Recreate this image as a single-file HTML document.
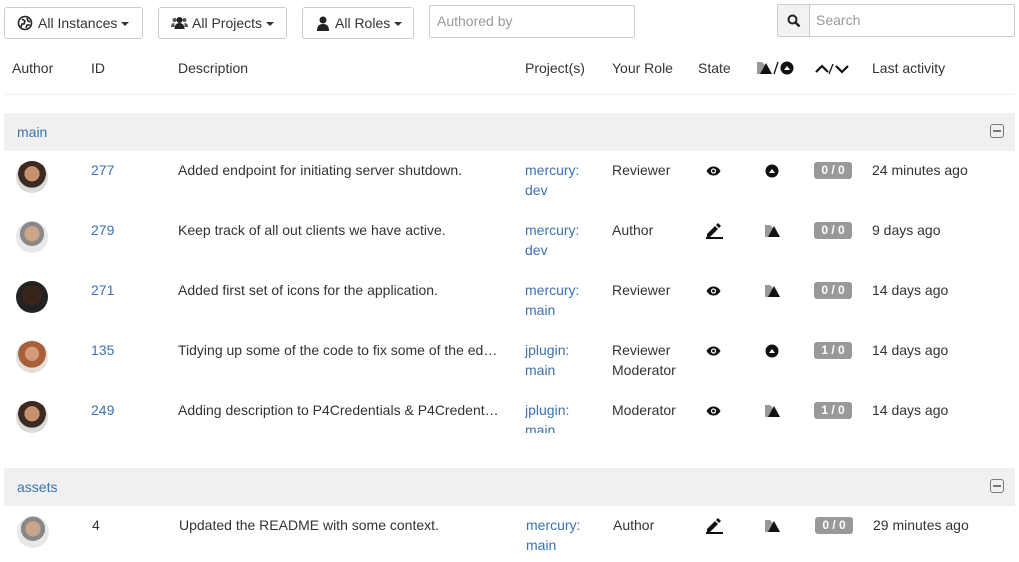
<!DOCTYPE html>
<html><head><meta charset="utf-8"><style>
*{box-sizing:border-box;margin:0;padding:0}
body{width:1019px;height:562px;overflow:hidden;background:#fff;font-family:"Liberation Sans",sans-serif;font-size:14px;color:#333;position:relative}
.a{position:absolute;white-space:nowrap}
.btn{position:absolute;top:7px;height:32px;border:1px solid #ccc;border-radius:3px;background:#fff;font-size:14px;color:#333;display:flex;align-items:center;padding-left:12px}
.car{display:inline-block;width:0;height:0;border-left:4px solid transparent;border-right:4px solid transparent;border-top:4px solid #333;margin-left:4px;margin-top:2px}
.inp{position:absolute;border:1px solid #ccc;border-radius:2px;color:#999;font-size:14px;padding:7px 7px}
.grp{position:absolute;left:4px;width:1011px;height:38px;background:#f0f0f0}
.grp span{position:absolute;left:13px;top:11px;color:#3a72b0}
.min{position:absolute;right:11px;top:11px;width:14px;height:14px;border:1.5px solid #777;border-radius:3px}
.min:after{content:"";position:absolute;left:2px;right:2px;top:5px;height:1.5px;background:#777}
.blue{color:#3a72b0}
.av{position:absolute;width:32px;height:32px;border-radius:50%;overflow:hidden}
.badge{position:absolute;width:38px;height:17px;background:#999;color:#fff;font-weight:bold;font-size:12px;text-align:center;line-height:17px;border-radius:3px}
</style></head><body>
<div class="btn" style="left:4px;width:139px"><svg width="16" height="16" viewBox="0 0 16 16" style="margin-right:5px"><circle cx="8" cy="8" r="6.5" fill="none" stroke="#222" stroke-width="1.6"/><path d="M5 4l3 2-1 3-2 0-1 3M10 3l1 3 2 1M9 13l1-3 3 0" stroke="#222" stroke-width="1.6" fill="none"/></svg>All Instances<span class="car"></span></div>
<div class="btn" style="left:158px;width:129px"><svg width="17" height="16" viewBox="0 0 17 16" style="margin-right:4px"><circle cx="8.5" cy="5" r="3" fill="#222"/><path d="M3.5 14c0-4 2-6 5-6s5 2 5 6z" fill="#222"/><circle cx="3.5" cy="5" r="2" fill="#555"/><circle cx="13.5" cy="5" r="2" fill="#555"/><path d="M0 12c0-3 1.5-4 3.5-4v4zM17 12c0-3-1.5-4-3.5-4v4z" fill="#555"/></svg>All Projects<span class="car"></span></div>
<div class="btn" style="left:302px;width:112px;padding-left:14px"><svg width="12" height="15" viewBox="0 0 12 15" style="margin-right:6px"><circle cx="6" cy="4" r="3.5" fill="#222"/><path d="M0 15c0-5 2-7 6-7s6 2 6 7z" fill="#222"/></svg>All Roles<span class="car"></span></div>
<div class="inp" style="left:429px;top:5px;width:206px;height:33px">Authored by</div>
<div class="a" style="left:777px;top:4px;width:33px;height:33px;border:1px solid #ccc;border-radius:2px 0 0 2px;background:#f2f2f2"><svg width="14" height="14" viewBox="0 0 14 14" style="position:absolute;left:9px;top:9px"><circle cx="5.5" cy="5.5" r="4" fill="none" stroke="#222" stroke-width="2"/><path d="M8.5 8.5l4 4" stroke="#222" stroke-width="2.4"/></svg></div>
<div class="inp" style="left:809px;top:4px;width:206px;height:33px;border-left:none">Search</div>

<div class="a" style="left:12px;top:60px">Author</div>
<div class="a" style="left:91px;top:60px">ID</div>
<div class="a" style="left:178px;top:60px">Description</div>
<div class="a" style="left:525px;top:60px">Project(s)</div>
<div class="a" style="left:612px;top:60px">Your Role</div>
<div class="a" style="left:698px;top:60px">State</div>
<div class="a" style="left:757px;top:61px"><svg width="38" height="14" viewBox="0 0 38 14"><path d="M0 1h5l3 3v2L5 13H0z" fill="#999"/><path d="M9 2l6 11H3z" fill="#111"/><path d="M17 13l4-12" stroke="#111" stroke-width="1.3"/><circle cx="30" cy="7" r="6.5" fill="#111"/><path d="M27 9l3-4 3 4z" fill="#fff"/></svg></div>
<div class="a" style="left:815px;top:62px"><svg width="36" height="12" viewBox="0 0 36 12"><path d="M1 9l6-6 6 6" stroke="#111" stroke-width="2.2" fill="none"/><path d="M14 11l4-10" stroke="#111" stroke-width="1.3"/><path d="M21 3l6 6 6-6" stroke="#111" stroke-width="2.2" fill="none"/></svg></div>
<div class="a" style="left:872px;top:60px">Last activity</div>
<div class="a" style="left:4px;top:94px;width:1011px;height:1px;background:#eee"></div>

<div class="grp" style="top:113px"><span>main</span><div class="min"></div></div>
<div class="grp" style="top:468px"><span>assets</span><div class="min"></div></div>

<div class="av" style="left:16px;top:161px;background:radial-gradient(circle at 50% 40%,#c8926e 0 30%,#3a2a22 31% 55%,#d9d9d9 56%)"></div>
<div class="av" style="left:16px;top:221px;background:radial-gradient(circle at 50% 40%,#caa58a 0 30%,#888 31% 48%,#e8e8e8 49%)"></div>
<div class="av" style="left:16px;top:281px;background:radial-gradient(circle at 50% 45%,#3a2418 0 40%,#222 41%)"></div>
<div class="av" style="left:16px;top:341px;background:radial-gradient(circle at 50% 40%,#d49a7a 0 28%,#a8603a 29% 55%,#e5e0dc 56%)"></div>
<div class="av" style="left:16px;top:401px;background:radial-gradient(circle at 50% 40%,#c8926e 0 30%,#3a2a22 31% 55%,#d9d9d9 56%)"></div>
<div class="av" style="left:17px;top:516px;background:radial-gradient(circle at 50% 40%,#caa58a 0 30%,#888 31% 48%,#e8e8e8 49%)"></div>

<div class="a blue" style="left:91px;top:162px">277</div>
<div class="a" style="left:178px;top:162px">Added endpoint for initiating server shutdown.</div>
<div class="a blue" style="left:525px;top:160px;line-height:20px">mercury:<br>dev</div>
<div class="a" style="left:612px;top:162px">Reviewer</div>

<div class="a blue" style="left:91px;top:222px">279</div>
<div class="a" style="left:178px;top:222px">Keep track of all out clients we have active.</div>
<div class="a blue" style="left:525px;top:220px;line-height:20px">mercury:<br>dev</div>
<div class="a" style="left:612px;top:222px">Author</div>

<div class="a blue" style="left:91px;top:282px">271</div>
<div class="a" style="left:178px;top:282px">Added first set of icons for the application.</div>
<div class="a blue" style="left:525px;top:280px;line-height:20px">mercury:<br>main</div>
<div class="a" style="left:612px;top:282px">Reviewer</div>

<div class="a blue" style="left:91px;top:342px">135</div>
<div class="a" style="left:178px;top:342px">Tidying up some of the code to fix some of the ed…</div>
<div class="a blue" style="left:525px;top:340px;line-height:20px">jplugin:<br>main</div>
<div class="a" style="left:612px;top:340px;line-height:20px">Reviewer<br>Moderator</div>

<div class="a blue" style="left:91px;top:402px">249</div>
<div class="a" style="left:178px;top:402px">Adding description to P4Credentials &amp; P4Credent…</div>
<div class="a blue" style="left:525px;top:400px;line-height:20px;height:33px;overflow:hidden">jplugin:<br>main</div>
<div class="a" style="left:612px;top:402px">Moderator</div>

<div class="a" style="left:92px;top:517px">4</div>
<div class="a" style="left:179px;top:517px">Updated the README with some context.</div>
<div class="a blue" style="left:526px;top:515px;line-height:20px">mercury:<br>main</div>
<div class="a" style="left:613px;top:517px">Author</div>

<svg class="a" style="left:706px;top:166px" width="15" height="10" viewBox="0 0 15 10"><path d="M0.5 5C2.5 1.5 5 0.5 7.5 0.5S12.5 1.5 14.5 5C12.5 8.5 10 9.5 7.5 9.5S2.5 8.5 0.5 5z" fill="#111"/><circle cx="7.5" cy="5" r="2.6" fill="#fff"/><circle cx="7.5" cy="5" r="1.4" fill="#111"/></svg>
<svg class="a" style="left:706px;top:286px" width="15" height="10" viewBox="0 0 15 10"><path d="M0.5 5C2.5 1.5 5 0.5 7.5 0.5S12.5 1.5 14.5 5C12.5 8.5 10 9.5 7.5 9.5S2.5 8.5 0.5 5z" fill="#111"/><circle cx="7.5" cy="5" r="2.6" fill="#fff"/><circle cx="7.5" cy="5" r="1.4" fill="#111"/></svg>
<svg class="a" style="left:706px;top:346px" width="15" height="10" viewBox="0 0 15 10"><path d="M0.5 5C2.5 1.5 5 0.5 7.5 0.5S12.5 1.5 14.5 5C12.5 8.5 10 9.5 7.5 9.5S2.5 8.5 0.5 5z" fill="#111"/><circle cx="7.5" cy="5" r="2.6" fill="#fff"/><circle cx="7.5" cy="5" r="1.4" fill="#111"/></svg>
<svg class="a" style="left:706px;top:406px" width="15" height="10" viewBox="0 0 15 10"><path d="M0.5 5C2.5 1.5 5 0.5 7.5 0.5S12.5 1.5 14.5 5C12.5 8.5 10 9.5 7.5 9.5S2.5 8.5 0.5 5z" fill="#111"/><circle cx="7.5" cy="5" r="2.6" fill="#fff"/><circle cx="7.5" cy="5" r="1.4" fill="#111"/></svg>
<svg class="a" style="left:706px;top:223px" width="17" height="16" viewBox="0 0 17 16"><path d="M1 11l8-8 3 3-8 8H1z M10 2l2-2 3 3-2 2z" fill="#111"/><rect x="0" y="14" width="17" height="2" fill="#111"/></svg>
<svg class="a" style="left:706px;top:518px" width="17" height="16" viewBox="0 0 17 16"><path d="M1 11l8-8 3 3-8 8H1z M10 2l2-2 3 3-2 2z" fill="#111"/><rect x="0" y="14" width="17" height="2" fill="#111"/></svg>

<svg class="a" style="left:765px;top:164px" width="14" height="14" viewBox="0 0 14 14"><circle cx="7" cy="7" r="6.5" fill="#111"/><path d="M4 9l3-4 3 4z" fill="#fff"/></svg>
<svg class="a" style="left:765px;top:344px" width="14" height="14" viewBox="0 0 14 14"><circle cx="7" cy="7" r="6.5" fill="#111"/><path d="M4 9l3-4 3 4z" fill="#fff"/></svg>
<svg class="a" style="left:765px;top:224px" width="15" height="14" viewBox="0 0 15 14"><path d="M0 1h5l3 3v2L5 13H0z" fill="#999"/><path d="M9 2l6 11H3z" fill="#111"/></svg>
<svg class="a" style="left:765px;top:284px" width="15" height="14" viewBox="0 0 15 14"><path d="M0 1h5l3 3v2L5 13H0z" fill="#999"/><path d="M9 2l6 11H3z" fill="#111"/></svg>
<svg class="a" style="left:765px;top:404px" width="15" height="14" viewBox="0 0 15 14"><path d="M0 1h5l3 3v2L5 13H0z" fill="#999"/><path d="M9 2l6 11H3z" fill="#111"/></svg>
<svg class="a" style="left:765px;top:519px" width="15" height="14" viewBox="0 0 15 14"><path d="M0 1h5l3 3v2L5 13H0z" fill="#999"/><path d="M9 2l6 11H3z" fill="#111"/></svg>

<div class="badge" style="left:814px;top:162px">0 / 0</div>
<div class="badge" style="left:814px;top:222px">0 / 0</div>
<div class="badge" style="left:814px;top:282px">0 / 0</div>
<div class="badge" style="left:814px;top:342px">1 / 0</div>
<div class="badge" style="left:814px;top:402px">1 / 0</div>
<div class="badge" style="left:815px;top:517px">0 / 0</div>

<div class="a" style="left:872px;top:162px">24 minutes ago</div>
<div class="a" style="left:872px;top:222px">9 days ago</div>
<div class="a" style="left:872px;top:282px">14 days ago</div>
<div class="a" style="left:872px;top:342px">14 days ago</div>
<div class="a" style="left:872px;top:402px">14 days ago</div>
<div class="a" style="left:873px;top:517px">29 minutes ago</div>
</body></html>
